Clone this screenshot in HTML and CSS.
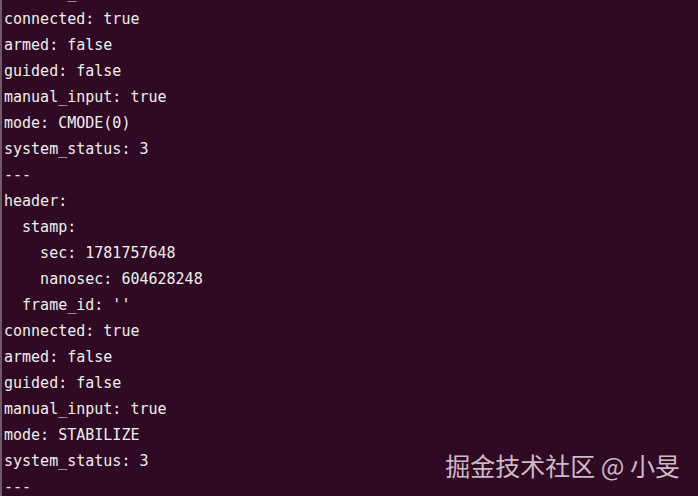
FILE: index.html
```html
<!DOCTYPE html>
<html lang="zh">
<head>
<meta charset="utf-8">
<title>Terminal</title>
<link rel="stylesheet" href="styles.css">
</head>
<body>
<div class="term">
<pre class="out">  frame_id: ''
connected: true
armed: false
guided: false
manual_input: true
mode: CMODE(0)
system_status: 3
---
header:
  stamp:
    sec: 1781757648
    nanosec: 604628248
  frame_id: ''
connected: true
armed: false
guided: false
manual_input: true
mode: STABILIZE
system_status: 3
---</pre>
<div class="mark">掘金技术社区 @ 小旻</div>
</div>
</body>
</html>
```
FILE: styles.css
```css
html, body {
  margin: 0;
  padding: 0;
  background: #300a24;
}
.term {
  position: relative;
  width: 698px;
  height: 496px;
  overflow: hidden;
  background: #300a24;
  box-sizing: border-box;
  border-left: 2px solid #6e5a66;
}
.out {
  margin: -20px 0 0 2px;
  font-family: "DejaVu Sans Mono", "Liberation Mono", monospace;
  font-size: 15px;
  line-height: 26px;
  color: #eeeeec;
}
.mark {
  position: absolute;
  right: 18px;
  bottom: 16px;
  font-family: "Noto Sans CJK SC", "Noto Sans", sans-serif;
  font-size: 25px;
  line-height: 30px;
  color: rgba(235, 220, 230, 0.85);
}
```
